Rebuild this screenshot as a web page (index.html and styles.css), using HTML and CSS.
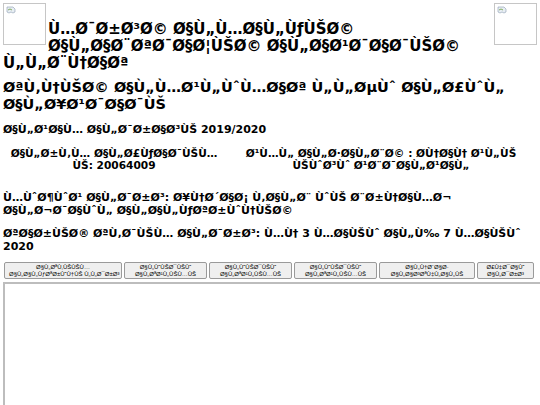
FILE: index.html
```html
<!DOCTYPE html>
<html>
<head>
<meta charset="utf-8">
<title>Ù…Ø¯Ø±Ø³Ø©</title>
<link rel="stylesheet" href="styles.css">
</head>
<body>
<div class="header">
  <span class="pic pic-left"><svg class="broken" viewBox="0 0 10 10" width="10" height="10"><path d="M1 1h6l2 2v3l-2 1-2-1-2 1-2-1z" fill="#e8eef4" stroke="#8a9bb0" stroke-width="0.6"/><path d="M2 4l2-1 2 1" fill="none" stroke="#6a9a3a" stroke-width="0.8"/></svg></span>
  <span class="pic pic-right"><svg class="broken" viewBox="0 0 10 10" width="10" height="10"><path d="M1 1h6l2 2v3l-2 1-2-1-2 1-2-1z" fill="#e8eef4" stroke="#8a9bb0" stroke-width="0.6"/><path d="M2 4l2-1 2 1" fill="none" stroke="#6a9a3a" stroke-width="0.8"/></svg></span>
  <h1 class="title">Ù…Ø¯Ø±Ø³Ø© Ø§Ù„Ù…Ø§Ù„ÙƒÙŠØ© Ø§Ù„Ø§Ø¨ØªØ¯Ø§Ø¦ÙŠØ© Ø§Ù„Ø§Ø¹Ø¯Ø§Ø¯ÙŠØ© Ù„Ù„Ø¨Ù†Ø§Øª</h1>
</div>
<h2 class="subject">ØªÙ‚Ù†ÙŠØ© Ø§Ù„Ù…Ø¹Ù„ÙˆÙ…Ø§Øª Ù„Ù„ØµÙˆ Ø§Ù„Ø£ÙˆÙ„ Ø§Ù„Ø¥Ø¹Ø¯Ø§Ø¯ÙŠ</h2>
<h3 class="year">Ø§Ù„Ø¹Ø§Ù… Ø§Ù„Ø¯Ø±Ø§Ø³ÙŠ 2019/2020</h3>
<table class="info">
  <tr>
    <td class="cell c-left">Ø§Ù„Ø±Ù‚Ù… Ø§Ù„Ø£ÙƒØ§Ø¯ÙŠÙ…ÙŠ: 20064009</td>
    <td class="cell c-right">Ø¹Ù…Ù„ Ø§Ù„Ø·Ø§Ù„Ø¨Ø© : ØÙ†Ø§Ù† Ø¹Ù„ÙŠ ÙŠÙˆØ³Ùˆ Ø¹Ø¨Ø¯Ø§Ù„Ø¹Ø§Ù„</td>
  </tr>
</table>
<p class="line topic">Ù…ÙˆØ¶ÙˆØ¹ Ø§Ù„Ø¯Ø±Ø³: Ø¥Ù†Ø´Ø§Ø¡ Ù‚Ø§Ù„Ø¨ ÙˆÙŠ Ø¨Ø±Ù†Ø§Ù…Ø¬ Ø§Ù„Ø¬Ø¯Ø§ÙˆÙ„ Ø§Ù„Ø§Ù„ÙƒØªØ±ÙˆÙ†ÙŠØ©</p>
<p class="line date">ØªØ§Ø±ÙŠØ® ØªÙ‚Ø¯ÙŠÙ… Ø§Ù„Ø¯Ø±Ø³: Ù…Ù† 3 Ù…Ø§ÙŠÙˆ Ø§Ù„Ù‰ 7 Ù…Ø§ÙŠÙˆ 2020</p>
<div class="nav">
  <button class="btn b1">Ø§Ù„ØªÙ‚ÙŠÙŠÙ…<br>Ø§Ù„Ø§Ù„ÙƒØªØ±ÙˆÙ†ÙŠ Ù„Ù„Ø¯Ø±Ø³</button>
  <button class="btn b2">Ø§Ù„ÙˆÙŠØ¯ÙŠÙˆ<br>Ø§Ù„ØªØ¹Ù„ÙŠÙ…ÙŠ</button>
  <button class="btn b2">Ø§Ù„ÙˆÙŠØ¯ÙŠÙˆ<br>Ø§Ù„ØªØ¹Ù„ÙŠÙ…ÙŠ</button>
  <button class="btn b2">Ø§Ù„ÙˆÙŠØ¯ÙŠÙˆ<br>Ø§Ù„ØªØ¹Ù„ÙŠÙ…ÙŠ</button>
  <button class="btn b5">Ø§Ù„Ù†Ø´Ø§Ø·<br>Ø§Ù„Ø§Ø³ØªÙ‡Ù„Ø§Ù„ÙŠ</button>
  <button class="btn b6">Ø£Ù‡Ø¯Ø§Ùˆ<br>Ø§Ù„Ø¯Ø±Ø³</button>
</div>
<div class="frame"></div>
</body>
</html>
```
FILE: styles.css
```css
html { overflow: hidden; background: #fff; }
body {
  margin: 0;
  padding: 3px;
  font-family: "DejaVu Sans", Verdana, sans-serif;
  font-weight: bold;
  color: #000;
}
.header { overflow: hidden; }
.pic {
  display: block;
  width: 41px;
  height: 40px;
  border: 1px solid #c6c6c6;
  position: relative;
}
.pic-left { float: left; margin-right: 2px; }
.pic-right { float: right; }
.broken { position: absolute; left: 2px; top: 2px; }
.title {
  margin: 0;
  padding-top: 18px;
  font-size: 15px;
  line-height: 17px;
}
.subject {
  margin: 7px 0 0;
  font-size: 14.5px;
  line-height: 17px;
}
.year {
  margin: 10px 0 0;
  font-size: 11px;
  line-height: 13px;
}
.info {
  width: 100%;
  margin-top: 10px;
  border-collapse: collapse;
  table-layout: fixed;
}
.cell {
  text-align: center;
  font-size: 10.6px;
  line-height: 12px;
  padding: 1px 0;
}
.c-left { width: 222px; }
.line {
  margin: 19px 0 0;
  font-size: 11px;
  line-height: 13px;
}
.line.date { margin-top: 10px; }
.nav {
  display: flex;
  gap: 2px;
  margin-top: 9px;
  padding-left: 1px;
}
.btn {
  height: 17px;
  padding: 0 4px;
  font-family: "Liberation Sans", Arial, sans-serif;
  font-weight: normal;
  font-size: 6px;
  line-height: 7px;
  color: #000;
  background: #efefef;
  border: 1px solid #9a9a9a;
  border-radius: 2px;
  white-space: nowrap;
}
.b1 { width: 118px; }
.b2 { width: 83px; }
.b5 { width: 96px; }
.b6 { width: 57px; }
.frame {
  width: 540px;
  height: 200px;
  margin-top: 3px;
  border-top: 2px solid #bdbdbd;
  border-left: 2px solid #bdbdbd;
  border-right: 2px solid #e6e6e6;
  border-bottom: 2px solid #e6e6e6;
  box-sizing: border-box;
}
```
